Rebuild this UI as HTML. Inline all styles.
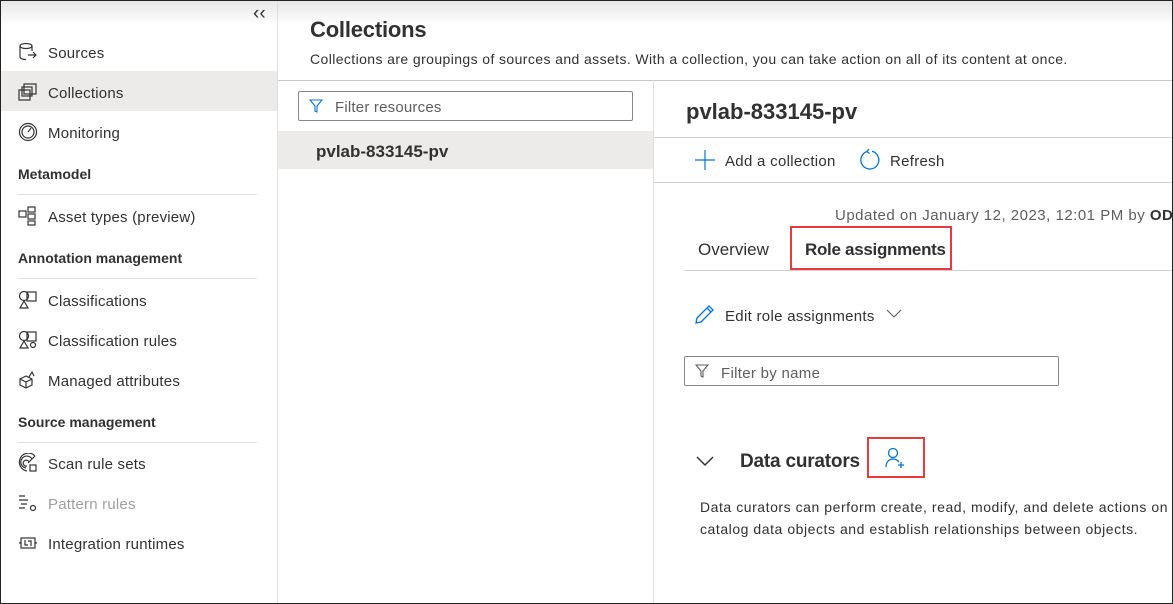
<!DOCTYPE html><html><head><style>
*{margin:0;padding:0;box-sizing:border-box}
body{width:1173px;height:604px;overflow:hidden;font-family:"Liberation Sans",sans-serif;color:#323130;background:#fff;position:relative}
.frame{position:absolute;inset:0;border:1px solid #222;pointer-events:none;z-index:10}
.shade{position:absolute;left:0;top:0;width:1173px;height:26px;background:linear-gradient(#e6e6e6,#fff)}
.a{position:absolute;white-space:nowrap}
.nav{font-size:15px;color:#323130;letter-spacing:.2px}
.hd{font-size:14px;font-weight:bold;color:#323130}
.hr{position:absolute;height:1px;background:#e1dfdd}
svg{position:absolute}
</style></head><body>
<div class="shade"></div>
<div class="a" style="left:253px;top:3px;font-size:19px;color:#333">‹‹</div>
<div style="position:absolute;left:277px;top:0;width:1px;height:604px;background:#e1dfdd"></div>
<div style="position:absolute;left:1px;top:71px;width:276px;height:40px;background:#edebe9"></div>
<svg style="left:18px;top:42px" width="20" height="20" viewBox="0 0 20 20" fill="none" stroke="#333" stroke-width="1.2"><ellipse cx="8" cy="4" rx="6" ry="2.5"/><path d="M2 4v11c0 1.4 2.7 2.5 6 2.5M14 4v5M10 13h8M15 10l3 3-3 3"/></svg>
<div class="a nav" style="left:48px;top:45px">Sources</div>
<svg style="left:18px;top:82px" width="20" height="20" viewBox="0 0 20 20" fill="none" stroke="#333" stroke-width="1.2"><rect x="6" y="2" width="12" height="10"/><rect x="4" y="5" width="10" height="9"/><rect x="1" y="8" width="11" height="10"/></svg>
<div class="a nav" style="left:48px;top:85px">Collections</div>
<svg style="left:18px;top:122px" width="20" height="20" viewBox="0 0 20 20" fill="none" stroke="#333" stroke-width="1.2"><circle cx="10" cy="10" r="8.5"/><circle cx="10" cy="10" r="6"/><path d="M10 10l3-4"/></svg>
<div class="a nav" style="left:48px;top:125px">Monitoring</div>
<div class="a hd" style="left:18px;top:166px">Metamodel</div>
<div class="hr" style="left:18px;top:194px;width:239px"></div>
<svg style="left:18px;top:206px" width="20" height="20" viewBox="0 0 20 20" fill="none" stroke="#333" stroke-width="1.2"><rect x="1" y="5" width="7" height="6"/><rect x="10" y="1" width="7" height="5"/><rect x="10" y="8" width="7" height="5"/><rect x="10" y="15" width="7" height="4"/></svg>
<div class="a nav" style="left:48px;top:209px">Asset types (preview)</div>
<div class="a hd" style="left:18px;top:250px">Annotation management</div>
<div class="hr" style="left:18px;top:278px;width:239px"></div>
<svg style="left:18px;top:290px" width="20" height="20" viewBox="0 0 20 20" fill="none" stroke="#333" stroke-width="1.2"><circle cx="6" cy="6" r="4.5"/><rect x="9" y="2" width="9" height="9"/><path d="M2 18l4-7 4 7z"/></svg>
<div class="a nav" style="left:48px;top:293px">Classifications</div>
<svg style="left:18px;top:330px" width="20" height="20" viewBox="0 0 20 20" fill="none" stroke="#333" stroke-width="1.2"><circle cx="6" cy="6" r="4.5"/><rect x="9" y="2" width="9" height="9"/><path d="M2 18l4-7 4 7z"/><circle cx="15" cy="15" r="2.5"/></svg>
<div class="a nav" style="left:48px;top:333px">Classification rules</div>
<svg style="left:18px;top:370px" width="20" height="20" viewBox="0 0 20 20" fill="none" stroke="#333" stroke-width="1.2"><path d="M2 9l6-3 6 3v6l-6 3-6-3zM2 9l6 3 6-3M8 12v6M11 7l3-5 2 4"/></svg>
<div class="a nav" style="left:48px;top:373px">Managed attributes</div>
<div class="a hd" style="left:18px;top:414px">Source management</div>
<div class="hr" style="left:18px;top:442px;width:239px"></div>
<svg style="left:18px;top:453px" width="20" height="20" viewBox="0 0 20 20" fill="none" stroke="#333" stroke-width="1.2"><path d="M17 3A9 9 0 1 0 9 18M14 6A6 6 0 1 0 8 15M11 9a3 3 0 1 0-2 4M10 10l7-7"/><rect x="12" y="12" width="6" height="6"/></svg>
<div class="a nav" style="left:48px;top:456px">Scan rule sets</div>
<svg style="left:18px;top:493px" width="20" height="20" viewBox="0 0 20 20" fill="none" stroke="#333" stroke-width="1.2"><path d="M1 3h6M1 7h9M3 11h6M1 15h6"/><circle cx="15" cy="15" r="2.5"/></svg>
<div class="a nav" style="left:48px;top:496px;color:#a19f9d">Pattern rules</div>
<svg style="left:18px;top:533px" width="20" height="20" viewBox="0 0 20 20" fill="none" stroke="#333" stroke-width="1.2"><rect x="3" y="5" width="14" height="10"/><path d="M1 10h2M17 10h2M7 7v5h3M10 8h3v5"/></svg>
<div class="a nav" style="left:48px;top:536px">Integration runtimes</div>

<div class="a" style="left:310px;top:17px;font-size:22px;font-weight:bold;color:#323130;letter-spacing:-.2px">Collections</div>
<div class="a" style="left:310px;top:51px;font-size:14px;color:#323130;letter-spacing:.4px">Collections are groupings of sources and assets. With a collection, you can take action on all of its content at once.</div>
<div class="hr" style="left:278px;top:80px;width:895px;background:#c8c6c4"></div>
<div style="position:absolute;left:653px;top:80px;width:1px;height:524px;background:#e1dfdd"></div>
<div style="position:absolute;left:298px;top:91px;width:335px;height:30px;border:1px solid #8a8886;border-radius:2px"></div>
<svg style="left:309px;top:99px" width="14" height="14" viewBox="0 0 14 14" fill="none" stroke="#0078d4" stroke-width="1.1"><path d="M1 1h12L8 7v6L6 12V7z"/></svg>
<div class="a" style="left:335px;top:99px;font-size:15px;color:#605e5c;letter-spacing:.2px">Filter resources</div>
<div style="position:absolute;left:278px;top:131px;width:375px;height:38px;background:#edebe9"></div>
<div class="a" style="left:316px;top:142px;font-size:17px;font-weight:bold;color:#323130">pvlab-833145-pv</div>

<div class="a" style="left:686px;top:99px;font-size:22px;font-weight:bold;color:#323130">pvlab-833145-pv</div>
<div class="hr" style="left:654px;top:137px;width:519px;background:#d2d0ce"></div>
<svg style="left:694px;top:149px" width="22" height="22" viewBox="0 0 22 22" stroke="#0078d4" stroke-width="1.2"><path d="M11 1v20M1 11h20"/></svg>
<div class="a" style="left:725px;top:153px;font-size:15px;letter-spacing:.3px">Add a collection</div>
<svg style="left:858px;top:148px" width="24" height="24" viewBox="0 0 24 24" fill="none" stroke="#0078d4" stroke-width="1.3"><path d="M9 3.5A9 9 0 1 0 14 3.3M9 3.5L11 1M9 3.5l2.5 2"/></svg>
<div class="a" style="left:890px;top:153px;font-size:15px;letter-spacing:.3px">Refresh</div>
<div class="hr" style="left:654px;top:182px;width:519px;background:#d2d0ce"></div>
<div class="a" style="left:835px;top:207px;font-size:15px;color:#605e5c;letter-spacing:.5px">Updated on January 12, 2023, 12:01 PM by <b style="color:#323130">ODL</b></div>
<div class="a" style="left:698px;top:240px;font-size:17px">Overview</div>
<div class="a" style="left:805px;top:240px;font-size:17px;font-weight:bold;letter-spacing:-.3px">Role assignments</div>
<div class="hr" style="left:684px;top:270px;width:489px;background:#d2d0ce"></div>
<div style="position:absolute;left:790px;top:226px;width:162px;height:44px;border:2px solid #e8393b"></div>
<svg style="left:694px;top:303px" width="22" height="22" viewBox="0 0 22 22" fill="none" stroke="#0078d4" stroke-width="1.3"><path d="M2 20l1-5L15 3l4 4L7 19zM13 5l4 4"/></svg>
<div class="a" style="left:725px;top:308px;font-size:15px;letter-spacing:.3px">Edit role assignments</div>
<svg style="left:886px;top:309px" width="16" height="10" viewBox="0 0 16 10" fill="none" stroke="#605e5c" stroke-width="1.1"><path d="M1 1l7 7 7-7"/></svg>
<div style="position:absolute;left:684px;top:356px;width:375px;height:30px;border:1px solid #8a8886;border-radius:2px"></div>
<svg style="left:695px;top:364px" width="14" height="14" viewBox="0 0 14 14" fill="none" stroke="#605e5c" stroke-width="1.1"><path d="M1 1h12L8 7v6L6 12V7z"/></svg>
<div class="a" style="left:721px;top:365px;font-size:15px;color:#605e5c;letter-spacing:.3px">Filter by name</div>
<svg style="left:696px;top:455px" width="18" height="12" viewBox="0 0 18 12" fill="none" stroke="#323130" stroke-width="1.5"><path d="M1 2l8 8 8-8"/></svg>
<div class="a" style="left:740px;top:451px;font-size:19px;font-weight:bold;letter-spacing:-.2px">Data curators</div>
<div style="position:absolute;left:867px;top:437px;width:58px;height:41px;border:2px solid #e8393b"></div>
<svg style="left:885px;top:447px" width="22" height="22" viewBox="0 0 22 22" fill="none" stroke="#0078d4" stroke-width="1.3"><circle cx="8" cy="6" r="4.5"/><path d="M1 20c0-5 3-8 7-8s5 2 6 3M16 15v6M13 18h6"/></svg>
<div class="a" style="left:700px;top:496px;font-size:14px;line-height:22px;letter-spacing:.55px">Data curators can perform create, read, modify, and delete actions on<br>catalog data objects and establish relationships between objects.</div>
<div class="frame"></div>
</body></html>
